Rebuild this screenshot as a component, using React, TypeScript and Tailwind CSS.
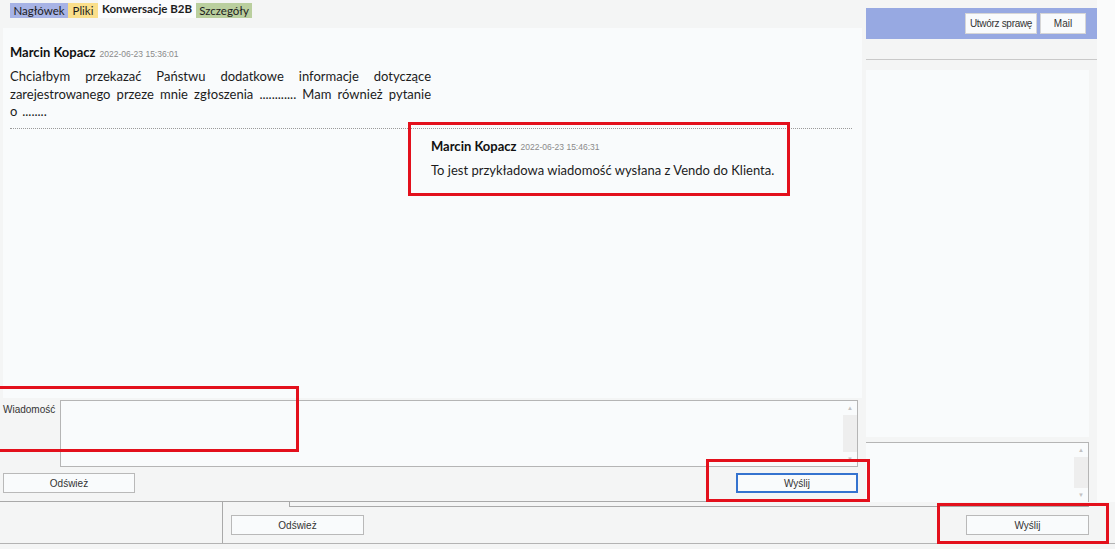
import React from 'react';

const ui = "font-['Liberation_Sans',Arial,sans-serif]";

const ScrollBar = () => (
  <div className="w-[14px] self-stretch bg-[#eeeeee] flex flex-col justify-between">
    <div className="h-[14px] bg-[#f9fbfc] flex items-center justify-center text-[6px] text-[#c2c2c2] leading-none">▲</div>
    <div className="h-[14px] bg-[#f9fbfc] flex items-center justify-center text-[6px] text-[#c2c2c2] leading-none">▼</div>
  </div>
);

const Btn: React.FC<{ label: string; className: string }> = ({ label, className }) => (
  <button className={`h-[20px] bg-[#f9fbfc] text-[10px] text-[#333] ${ui} ${className}`}>{label}</button>
);

const Message: React.FC<{ time: string; children: React.ReactNode; className?: string }> = ({ time, children, className }) => (
  <div className={className}>
    <div className="h-[16px] flex items-center gap-[4px]">
      <span className="text-[13px] font-bold text-[#111]">Marcin Kopacz</span>
      <span className={`text-[8.5px] text-[#8a8a8a] pt-[2px] ${ui}`}>{time}</span>
    </div>
    <div className="mt-[7px] text-[13px] leading-[17.5px] text-[#1c1c1c]">{children}</div>
  </div>
);

const RedBox: React.FC<{ className: string }> = ({ className }) => (
  <div className={`absolute border-[3px] border-[#e3101c] pointer-events-none ${className}`} />
);

const App: React.FC = () => {
  const tabs = [
    { label: 'Nagłówek', cls: 'w-[58px] h-[15px] bg-[#a7b3e5]' },
    { label: 'Pliki', cls: 'w-[30px] h-[15px] bg-[#fadf8b]' },
    { label: 'Konwersacje B2B', cls: 'w-[98px] h-[18px] bg-[#fbfcfd] font-bold' },
    { label: 'Szczegóły', cls: 'w-[56px] h-[15px] bg-[#bacf9e]' },
  ];

  return (
    <div className="relative w-[1115px] h-[549px] bg-[#f4f5f5] overflow-hidden flex flex-col font-['Lato',sans-serif]">
      <div className="flex h-[502px]">
        {/* front window */}
        <div className="w-[865px] flex flex-col border-b border-[#a9a9a9]">
          <div className="h-[18px] flex items-end pl-[10px]">
            {tabs.map(t => (
              <div key={t.label} className={`flex items-center justify-center text-[11.5px] text-[#1d1d1d] ${t.cls}`}>{t.label}</div>
            ))}
          </div>

          <div className="mt-[10px] ml-[3px] w-[859px] h-[370px] bg-[#f9fbfc] px-[7px] pt-[17px]">
            <Message time="2022-06-23 15:36:01" className="w-[421px]">
              <p className="text-justify [word-spacing:1.5px]">
                Chciałbym przekazać Państwu dodatkowe informacje dotyczące zarejestrowanego przeze mnie zgłoszenia ............ Mam również pytanie o ........
              </p>
            </Message>
            <div className="mt-[7px] w-[842px] border-t border-dotted border-[#9a9a9a]" />
            <Message time="2022-06-23 15:46:31" className="ml-[421px] mt-[10px]">
              <p>To jest przykładowa wiadomość wysłana z Vendo do Klienta.</p>
            </Message>
          </div>

          <div className="mt-[2px] flex">
            <div className={`w-[60px] pl-[3px] pt-[2px] text-[10px] text-[#333] ${ui}`}>Wiadomość</div>
            <div className="w-[798px] h-[67px] border border-[#b5b5b5] bg-[#f9fbfc] flex justify-end">
              <ScrollBar />
            </div>
          </div>

          <div className="mt-[6px] flex">
            <Btn label="Odśwież" className="ml-[3px] w-[132px] border border-[#b9b9b9]" />
            <Btn label="Wyślij" className="ml-auto mr-[7px] w-[122px] border-2 border-[#3573cf]" />
          </div>
        </div>

        {/* right column of the window behind */}
        <div className="flex-1 flex">
          <div className="w-[232px] flex flex-col pt-[8px] pl-[1px]">
            <div className="h-[31px] bg-[#97a9e2] flex items-center justify-end gap-[3px] pr-[11px]">
              <Btn label="Utwórz sprawę" className="w-[72px] h-[21px] border border-[#d6d6d6] tracking-[-0.3px]" />
              <Btn label="Mail" className="w-[46px] h-[21px] border border-[#d6d6d6]" />
            </div>
            <div className="mt-[20px] h-px bg-[#c9c9c9]" />
            <div className="mt-[10px] w-[223px] h-[367px] bg-[#f9fbfc]" />
            <div className="mt-[5px] w-[223px] flex-1 bg-[#f9fbfc] border-t border-r border-[#b5b5b5] flex justify-end">
              <ScrollBar />
            </div>
          </div>
          <div className="flex-1 bg-[#fafbfb]" />
        </div>
      </div>

      {/* bottom strip of the window behind */}
      <div className="h-[42px] flex border-b border-[#b3b3b3]">
        <div className="w-[223px] border-r border-[#a9a9a9]" />
        <div className="flex-1 flex flex-col">
          <div className="ml-[66px] w-[800px] h-[5px] border-l border-b border-[#a9a9a9]" />
          <div className="mt-[8px] flex">
            <Btn label="Odśwież" className="ml-[8px] w-[133px] h-[19px] border border-[#b9b9b9]" />
            <Btn label="Wyślij" className="ml-auto mr-[26px] w-[123px] border border-[#b9b9b9]" />
          </div>
        </div>
      </div>

      {/* red annotation frames */}
      <RedBox className="left-[408px] top-[122px] w-[382px] h-[74px]" />
      <RedBox className="left-[-4px] top-[386px] w-[303px] h-[66px]" />
      <RedBox className="left-[706px] top-[459px] w-[164px] h-[43px]" />
      <RedBox className="left-[937px] top-[503px] w-[172px] h-[41px]" />
    </div>
  );
};

export default App;
